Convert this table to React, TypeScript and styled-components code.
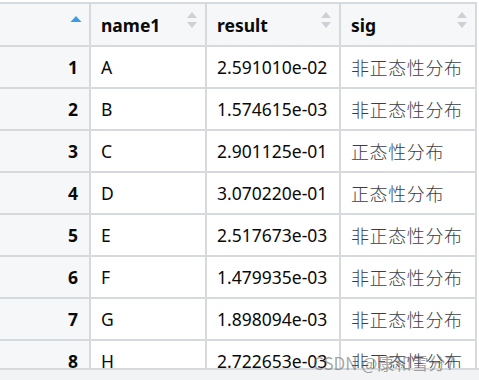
import React from "react";
import styled, { createGlobalStyle } from "styled-components";

const GlobalStyle = createGlobalStyle`
  html, body {
    margin: 0;
    padding: 0;
    background: #ffffff;
  }
  body {
    font-family: "Noto Sans", "Liberation Sans", sans-serif;
    color: #111;
  }
`;

const cols = "91px 116px 134px 136px";
const lineColor = "#d7dadd";

// Style
const Frame = styled.div`
  width: 479px;
  height: 380px;
  display: flex;
  flex-direction: column;
  overflow: hidden;
`;

const Scroller = styled.div`
  height: 366px;
  margin-top: 2px;
  overflow: hidden;
  border-bottom: 2px solid ${lineColor};
`;

const Table = styled.div`
  width: 477px;
  border-top: 2px solid ${lineColor};
`;

const Row = styled.div<{ $head?: boolean }>`
  display: grid;
  grid-template-columns: ${cols};
  height: ${(p) => (p.$head ? "43px" : "42px")};
`;

const Cell = styled.div<{ $index?: boolean; $head?: boolean }>`
  position: relative;
  display: flex;
  align-items: center;
  justify-content: ${(p) => (p.$index ? "flex-end" : "flex-start")};
  padding: ${(p) => (p.$index ? "0 11px 0 0" : "0 0 0 10px")};
  border-right: 2px solid ${lineColor};
  border-bottom: 2px solid ${lineColor};
  background: ${(p) => (p.$index || p.$head ? "#f5f7f9" : "#ffffff")};
  font-size: 17.5px;
  font-weight: ${(p) => (p.$index || p.$head ? 700 : 400)};
  color: #0a0a0a;
  white-space: nowrap;
`;

const Sig = styled.span`
  font-family: "Noto Sans CJK SC", "Noto Sans", sans-serif;
  font-size: 18px;
  font-weight: 300;
  letter-spacing: 0.6px;
  color: #3c3c44;
`;

const SortIcon = styled.svg`
  position: absolute;
  right: 7px;
  top: 7px;
`;

const Footer = styled.div`
  flex: 1;
  background: #f1f3f5;
`;

const Watermark = styled.div`
  position: absolute;
  left: 313px;
  top: 350px;
  font-family: "Noto Sans CJK SC", "Noto Sans", sans-serif;
  font-size: 17px;
  color: rgba(105, 105, 105, 0.6);
  pointer-events: none;
  white-space: nowrap;
`;

const data = [
  { n: "A", r: "2.591010e-02", s: "非正态性分布" },
  { n: "B", r: "1.574615e-03", s: "非正态性分布" },
  { n: "C", r: "2.901125e-01", s: "正态性分布" },
  { n: "D", r: "3.070220e-01", s: "正态性分布" },
  { n: "E", r: "2.517673e-03", s: "非正态性分布" },
  { n: "F", r: "1.479935e-03", s: "非正态性分布" },
  { n: "G", r: "1.898094e-03", s: "非正态性分布" },
  { n: "H", r: "2.722653e-03", s: "非正态性分布" },
];

function SortBoth() {
  return (
    <SortIcon width="12" height="18" viewBox="0 0 12 18">
      <path d="M6 1 L11 7 L1 7 Z" fill="#cdd1d5" />
      <path d="M6 17 L11 11 L1 11 Z" fill="#cdd1d5" />
    </SortIcon>
  );
}

function SortUp() {
  return (
    <SortIcon width="12" height="18" viewBox="0 0 12 18">
      <path d="M6 5 L11.5 11 L0.5 11 Z" fill="#3d9be4" />
    </SortIcon>
  );
}

function App() {
  return (
    <Frame>
      <GlobalStyle />
      <Scroller>
        <Table>
          <Row $head>
            <Cell $head>
              <SortUp />
            </Cell>
            <Cell $head>
              name1
              <SortBoth />
            </Cell>
            <Cell $head>
              result
              <SortBoth />
            </Cell>
            <Cell $head>
              sig
              <SortBoth />
            </Cell>
          </Row>
          {data.map((d, i) => (
            <Row key={d.n}>
              <Cell $index>{i + 1}</Cell>
              <Cell>{d.n}</Cell>
              <Cell>{d.r}</Cell>
              <Cell>
                <Sig>{d.s}</Sig>
              </Cell>
            </Row>
          ))}
        </Table>
      </Scroller>
      <Footer />
      <Watermark>CSDN @康和雪分7</Watermark>
    </Frame>
  );
}

export default App;
